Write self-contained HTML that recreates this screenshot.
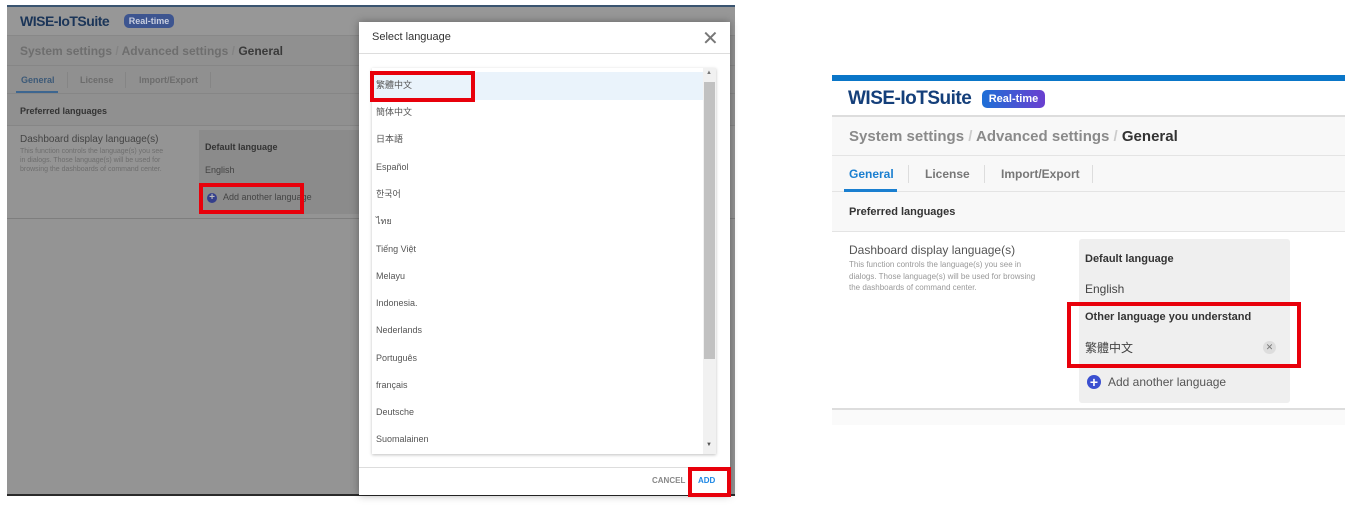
<!DOCTYPE html>
<html><head><meta charset="utf-8"><style>
*{margin:0;padding:0;box-sizing:border-box}
body{width:1352px;height:506px;background:#fff;position:relative;overflow:hidden;font-family:"Liberation Sans","Noto Sans CJK TC",sans-serif}
.a{position:absolute}
.red{position:absolute;border:4px solid #e8000b}
.logo{font-weight:bold;color:#143f7a;letter-spacing:-0.5px}
.badge{background:linear-gradient(90deg,#1d6fd6,#6a3fd0);color:#fff;font-weight:bold;border-radius:5px;text-align:center}
.it{position:absolute;left:376px;font-size:9px;line-height:12px;height:12px;color:#555;white-space:nowrap}
</style></head><body>

<!-- LEFT PANEL (dimmed) -->
<div class="a" style="left:7px;top:5px;width:728px;height:491px;background:#949494"></div>
<div class="a" style="left:7px;top:5px;width:728px;height:2px;background:#3a5470"></div>
<div class="a" style="left:7px;top:7px;width:728px;height:29px;background:#979797;border-bottom:1px solid #888"></div>
<div class="a logo" style="left:20px;top:13px;font-size:14px;color:#1b3558">WISE-IoTSuite</div>
<div class="a badge" style="left:124px;top:14px;width:50px;height:14px;font-size:9px;line-height:14px;background:#3d5590;color:#c9cfe0">Real-time</div>
<div class="a" style="left:7px;top:36px;width:728px;height:30px;background:#909090;border-bottom:1px solid #868686"></div>
<div class="a" style="left:20px;top:44px;font-size:12px;color:#6e6e6e;font-weight:bold">System settings <span style="color:#838383">/</span> Advanced settings <span style="color:#838383">/</span> <span style="color:#3a3a3a">General</span></div>
<div class="a" style="left:7px;top:66px;width:728px;height:28px;background:#909090;border-bottom:1px solid #868686"></div>
<div class="a" style="left:21px;top:75px;font-size:9px;font-weight:bold;color:#3d5a78">General</div>
<div class="a" style="left:16px;top:91px;width:42px;height:2px;background:#3d6690"></div>
<div class="a" style="left:67px;top:72px;width:1px;height:16px;background:#858585"></div>
<div class="a" style="left:80px;top:75px;font-size:9px;font-weight:bold;color:#6c6c6c">License</div>
<div class="a" style="left:125px;top:72px;width:1px;height:16px;background:#858585"></div>
<div class="a" style="left:139px;top:75px;font-size:9px;font-weight:bold;color:#6c6c6c">Import/Export</div>
<div class="a" style="left:210px;top:72px;width:1px;height:16px;background:#858585"></div>
<div class="a" style="left:7px;top:94px;width:728px;height:32px;background:#909090;border-bottom:1px solid #868686"></div>
<div class="a" style="left:20px;top:106px;font-size:9px;font-weight:bold;color:#333">Preferred languages</div>
<div class="a" style="left:20px;top:134px;font-size:10px;color:#444">Dashboard display language(s)</div>
<div class="a" style="left:20px;top:147px;font-size:7px;line-height:9px;color:#6e6e6e;width:150px">This function controls the language(s) you see in dialogs. Those language(s) will be used for browsing the dashboards of command center.</div>
<div class="a" style="left:199px;top:130px;width:170px;height:84px;background:#8b8b8b"></div>
<div class="a" style="left:205px;top:142px;font-size:9px;font-weight:bold;color:#333">Default language</div>
<div class="a" style="left:205px;top:165px;font-size:9px;color:#444">English</div>
<div class="a" style="left:207px;top:193px;width:10px;height:10px;border-radius:50%;background:#343e8c;color:#bbb;font-size:10px;line-height:10px;text-align:center;font-weight:bold">+</div>
<div class="a" style="left:223px;top:192px;font-size:9px;color:#444">Add another language</div>
<div class="a" style="left:7px;top:218px;width:728px;height:1px;background:#7e7e7e"></div>
<div class="a" style="left:7px;top:494px;width:728px;height:2px;background:#2a2a2a"></div>
<div class="red" style="left:199px;top:183px;width:105px;height:31px"></div>

<!-- DIALOG -->
<div class="a" style="left:359px;top:22px;width:371px;height:473px;background:#fff;box-shadow:0 0 8px rgba(0,0,0,.35)"></div>
<div class="a" style="left:372px;top:31px;font-size:11px;color:#333">Select language</div>
<div class="a" style="left:702px;top:26px;font-size:20px;color:#777;font-weight:300">✕</div>
<div class="a" style="left:359px;top:53px;width:371px;height:1px;background:#ddd"></div>
<div class="a" style="left:372px;top:68px;width:344px;height:386px;background:#fff;box-shadow:0 1px 3px rgba(0,0,0,.25)"></div>
<div class="a" style="left:372px;top:72px;width:331px;height:28px;background:#eaf3fb"></div>
<div class="a" style="left:703px;top:68px;width:13px;height:386px;background:#f1f1f1"></div>
<div class="a" style="left:704px;top:82px;width:11px;height:277px;background:#c1c1c1"></div>
<div class="a" style="left:706px;top:70px;font-size:6px;color:#777">▲</div>
<div class="a" style="left:706px;top:442px;font-size:6px;color:#555">▼</div>
<div class="it" style="top:79px">繁體中文</div>
<div class="it" style="top:106px">簡体中文</div>
<div class="it" style="top:133px">日本語</div>
<div class="it" style="top:161px">Español</div>
<div class="it" style="top:188px">한국어</div>
<div class="it" style="top:215px">ไทย</div>
<div class="it" style="top:243px">Tiếng Việt</div>
<div class="it" style="top:270px">Melayu</div>
<div class="it" style="top:297px">Indonesia.</div>
<div class="it" style="top:324px">Nederlands</div>
<div class="it" style="top:352px">Português</div>
<div class="it" style="top:379px">français</div>
<div class="it" style="top:406px">Deutsche</div>
<div class="it" style="top:433px">Suomalainen</div>
<div class="a" style="left:359px;top:467px;width:371px;height:1px;background:#ddd"></div>
<div class="a" style="left:652px;top:476px;font-size:8px;font-weight:bold;color:#888">CANCEL</div>
<div class="a" style="left:698px;top:476px;font-size:8px;font-weight:bold;color:#1e88e5">ADD</div>
<div class="red" style="left:370px;top:71px;width:105px;height:31px"></div>
<div class="red" style="left:688px;top:467px;width:43px;height:30px"></div>

<!-- RIGHT PANEL -->
<div class="a" style="left:832px;top:75px;width:513px;height:6px;background:#0a76c8"></div>
<div class="a" style="left:832px;top:81px;width:513px;height:36px;background:#fff;border-bottom:2px solid #ddd"></div>
<div class="a logo" style="left:848px;top:88px;font-size:19px">WISE-IoTSuite</div>
<div class="a badge" style="left:982px;top:90px;width:63px;height:18px;font-size:11px;line-height:18px">Real-time</div>
<div class="a" style="left:832px;top:117px;width:513px;height:39px;background:#f8f8f8;border-bottom:1px solid #e4e4e4"></div>
<div class="a" style="left:849px;top:128px;font-size:15px;font-weight:bold;color:#8a8a8a">System settings <span style="color:#ccc">/</span> Advanced settings <span style="color:#ccc">/</span> <span style="color:#333">General</span></div>
<div class="a" style="left:832px;top:156px;width:513px;height:36px;background:#f8f8f8;border-bottom:1px solid #e4e4e4"></div>
<div class="a" style="left:849px;top:167px;font-size:12px;font-weight:bold;color:#1a7fd0">General</div>
<div class="a" style="left:844px;top:189px;width:53px;height:3px;background:#1a7fd0"></div>
<div class="a" style="left:908px;top:165px;width:1px;height:18px;background:#ddd"></div>
<div class="a" style="left:925px;top:167px;font-size:12px;font-weight:bold;color:#777">License</div>
<div class="a" style="left:984px;top:165px;width:1px;height:18px;background:#ddd"></div>
<div class="a" style="left:1001px;top:167px;font-size:12px;font-weight:bold;color:#777">Import/Export</div>
<div class="a" style="left:1092px;top:165px;width:1px;height:18px;background:#ddd"></div>
<div class="a" style="left:832px;top:192px;width:513px;height:40px;background:#f8f8f8;border-bottom:1px solid #e4e4e4"></div>
<div class="a" style="left:849px;top:206px;font-size:11px;font-weight:bold;color:#333">Preferred languages</div>
<div class="a" style="left:849px;top:243px;font-size:12px;color:#555">Dashboard display language(s)</div>
<div class="a" style="left:849px;top:259px;font-size:8px;line-height:11.5px;color:#999;width:192px">This function controls the language(s) you see in dialogs. Those language(s) will be used for browsing the dashboards of command center.</div>
<div class="a" style="left:1079px;top:239px;width:211px;height:164px;background:#efefef;border-radius:3px"></div>
<div class="a" style="left:1085px;top:253px;font-size:11px;font-weight:bold;color:#333">Default language</div>
<div class="a" style="left:1085px;top:282px;font-size:12px;color:#444">English</div>
<div class="a" style="left:1085px;top:311px;font-size:11px;font-weight:bold;color:#333">Other language you understand</div>
<div class="a" style="left:1085px;top:339px;font-size:12px;color:#444">繁體中文</div>
<div class="a" style="left:1263px;top:341px;width:13px;height:13px;border-radius:50%;background:#ddd;color:#777;font-size:9px;line-height:13px;text-align:center">✕</div>
<div class="a" style="left:1087px;top:375px;width:14px;height:14px;border-radius:50%;background:#3a4fd0;color:#fff;font-size:14px;line-height:14px;text-align:center;font-weight:bold">+</div>
<div class="a" style="left:1108px;top:375px;font-size:12px;color:#555">Add another language</div>
<div class="a" style="left:832px;top:408px;width:513px;height:2px;background:#ddd"></div>
<div class="a" style="left:832px;top:410px;width:513px;height:15px;background:#fafafa"></div>
<div class="red" style="left:1067px;top:302px;width:234px;height:66px"></div>
</body></html>
